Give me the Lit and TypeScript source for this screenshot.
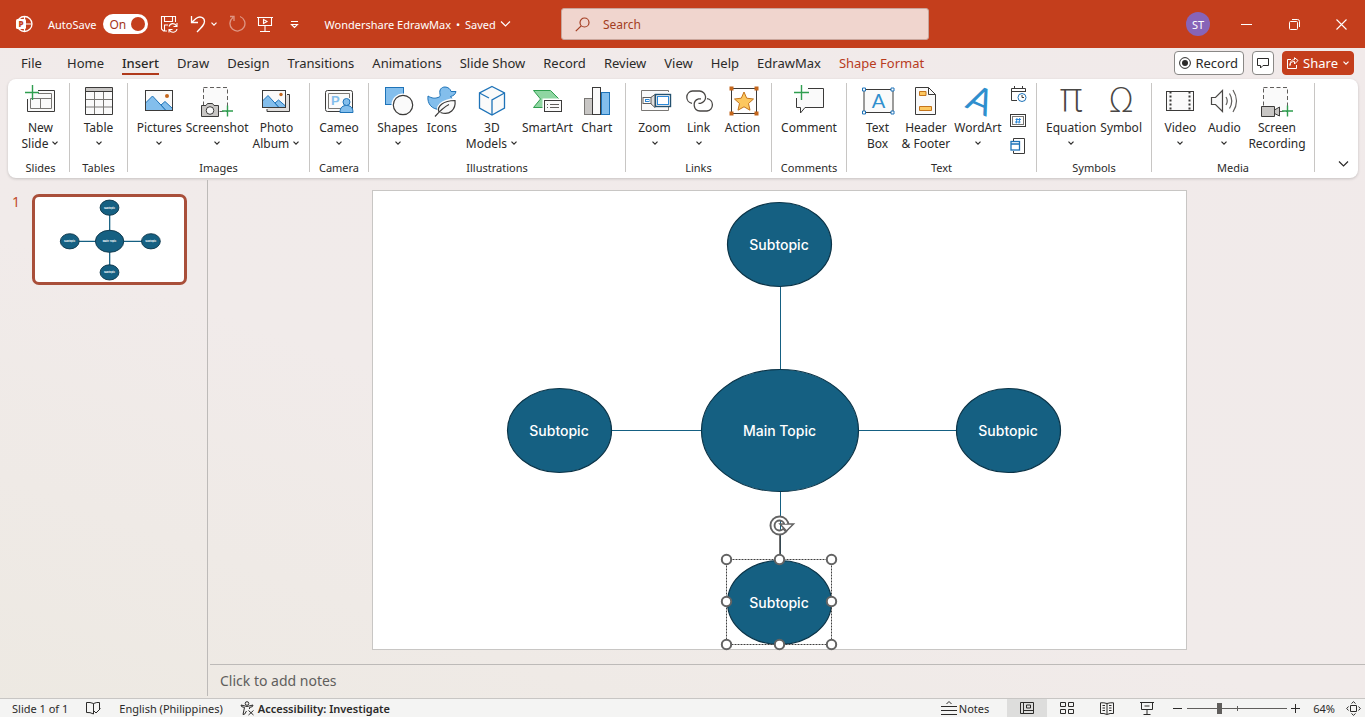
import { LitElement, html, svg, css, nothing, TemplateResult } from "lit";
import { customElement, property } from "lit/decorators.js";
import { classMap } from "lit/directives/class-map.js";

const DARK = "#3b3a39";
const BLUE = "#1e73b8";
const SKY = "#83beec";

const svgIcon = (size: number, body: unknown) =>
  html`<svg width=${size} height=${size} viewBox="0 0 ${size} ${size}" fill="none" aria-hidden="true">${body}</svg>`;

const chevron = html`<svg class="chev" width="8" height="8" viewBox="0 0 8 8" fill="none" stroke="currentColor" stroke-width="1.2" aria-hidden="true"><path d="M1.500 2.700 4 5.200 6.500 2.700"/></svg>`;

const icons: Record<string, TemplateResult> = {
  newSlide: svg`
    <path d="M13 5.500H29.500V26.500H2.500V14" stroke=${DARK} fill="#fafafa"/>
    <path d="M13 8.500H26.500V23.500H5.500V13.500H26.500M15.500 13.500V23.500" stroke="#797774"/>
    <path d="M7.500 0V15M0 7.500H14" stroke="#2f9e4f" stroke-width="1.400"/>`,
  table: svg`
    <path d="M2.500 2.500H29.500V29.500H2.500Z" fill="#fafafa"/>
    <path d="M2.500 2.500H29.500V6.500H2.500Z" fill="#c8c6c4"/>
    <path d="M2.500 14.500H29.500M2.500 22H29.500M11.500 6.500V29.500M20.500 6.500V29.500" stroke="#797774"/>
    <path d="M2.500 2.500H29.500V29.500H2.500ZM2.500 6.500H29.500" stroke=${DARK}/>`,
  pictures: svg`
    <rect x="2.500" y="5.500" width="27" height="20" fill="#fafafa"/>
    <path d="M2.500 18 9.500 11 23 25.500H2.500Z" fill=${SKY} stroke=${BLUE}/>
    <path d="M18 20 22 16.500 29.500 23.500V25.500H23Z" fill=${SKY} stroke=${BLUE}/>
    <circle cx="24" cy="11" r="2" fill="#c4661c"/>
    <rect x="2.500" y="5.500" width="27" height="20" stroke=${DARK}/>`,
  screenshot: svg`
    <rect x="2.500" y="2.500" width="24" height="24" fill="#fafafa" stroke="#605e5c" stroke-dasharray="4 2.500"/>
    <path d="M.5 20.500H5L6.500 18.500H11.500L13 20.500H17.500V31.500H.5Z" fill="#c8c6c4" stroke=${DARK}/>
    <circle cx="9" cy="25.500" r="3.800" fill="#fafafa" stroke=${DARK}/>
    <path d="M26.500 20.500V31.500M21 26H32" stroke="#2f9e4f" stroke-width="1.400"/>`,
  album: svg`
    <path d="M27 9.500H29.500V26.500H7V24" fill="#e1dfdd" stroke=${DARK}/>
    <rect x="2.500" y="5.500" width="23" height="17" fill="#fafafa"/>
    <path d="M2.500 16 8 10.500 19 22.500H2.500Z" fill=${SKY} stroke=${BLUE}/>
    <path d="M15 18 18.500 15 25.500 21V22.500H19Z" fill=${SKY} stroke=${BLUE}/>
    <circle cx="21" cy="9.500" r="1.700" fill="#c4661c"/>
    <rect x="2.500" y="5.500" width="23" height="17" stroke=${DARK}/>`,
  cameo: svg`
    <rect x="2.500" y="5.500" width="27" height="21" rx="2" fill="#fafafa" stroke=${DARK}/>
    <path d="M18 23.500H5.500V8.500H26.500V13" stroke="#797774"/>
    <text x="8" y="20" font-family="Liberation Sans, sans-serif" font-size="13" font-weight="700" fill="#83beec">P</text>
    <path d="M17 27.500C17 22 20 20.500 23.500 20.500S30 22 30 27.500Z" fill=${SKY} stroke=${BLUE}/>
    <circle cx="23.500" cy="17" r="3.500" fill=${SKY} stroke=${BLUE}/>`,
  shapes: svg`
    <rect x="3.500" y="2.500" width="18" height="17" fill=${SKY} stroke=${BLUE}/>
    <circle cx="21" cy="20" r="11.500" fill="#fff"/>
    <circle cx="21" cy="20" r="9.700" fill="#fafafa" stroke=${DARK} stroke-width="1.200"/>`,
  icons: svg`
    <path d="M2 11C6 13.500 9 13.500 12 12.500C14 12 14.500 11 14 9C13 4.500 15.500 2 19 2C22 2 24.500 4 25 6.500H30C29.500 9.500 27 11 24.500 11.500L27 15C27 20 21 24.500 14 24.500C6 24.500 1 19 2 11Z" fill=${SKY} stroke=${BLUE}/>
    <path d="M9 32 14 27C10 22 15 15.500 30 14.500C31 24 25 31 15 28" fill="#fff" stroke="#fff" stroke-width="3"/>
    <path d="M9 31.500C13 27 18 22 23 19.500M13 27C10.500 21.500 17 15.500 29 15.500C30 24 24 31 14.500 27.500" fill="#fafafa" stroke=${DARK} stroke-width="1.200"/>`,
  models: svg`
    <path d="M16 1.500 28.500 8V23L16 30 3.500 23V8Z" fill="#fafafa" stroke=${BLUE} stroke-width="1.300"/>
    <path d="M3.500 8 13 13M28.500 8 16 15V30" stroke=${BLUE} stroke-width="1.300"/>`,
  smartArt: svg`
    <path d="M2.500 5.500H19.500L28 14 19.500 22.500H2.500L9.500 14Z" fill="#8fd6a2" stroke="#2f9e4f"/>
    <rect x="11.500" y="13.500" width="20" height="15" fill="#fff"/>
    <rect x="13.500" y="15.500" width="17" height="11" fill="#fafafa" stroke=${DARK}/>
    <path d="M16 19.500H17M19 19.500H28M16 22.500H17M19 22.500H28" stroke="#605e5c"/>`,
  chart: svg`
    <rect x="3.500" y="13.500" width="8" height="16" fill="#c8c6c4" stroke="#797774"/>
    <rect x="20.500" y="7.500" width="8" height="22" fill=${SKY} stroke=${BLUE}/>
    <rect x="11.500" y="2.500" width="8" height="27" fill="#fafafa" stroke=${DARK}/>`,
  zoom: svg`
    <path d="M29.500 7V5.500H2.500V25.500H29.500V22" fill="#fafafa" stroke="#797774"/>
    <path d="M11 13 16 9.500V22.500L11 18" fill="#e1dfdd" stroke="#605e5c"/>
    <rect x="16.500" y="9.500" width="15" height="12" fill="#fff" stroke="#24516f" stroke-width="1.400"/>
    <rect x="18.500" y="11.500" width="11" height="8" stroke="#2b88d8"/>
    <rect x="4" y="12.500" width="8" height="6" fill="#fff" stroke="#605e5c"/>
    <rect x="6.500" y="14.500" width="3.500" height="2" stroke="#2b88d8"/>`,
  link: svg`
    <g stroke="#494745" stroke-width="1.300">
      <path d="M9 18.300A6.200 6.200 0 0 1 9.500 6H16.500A6.200 6.200 0 0 1 17.500 18.300H15.500"/>
      <path d="M24 13.700A6.200 6.200 0 0 1 24 26H17A6.200 6.200 0 0 1 15.500 13.900H18"/>
    </g>`,
  action: svg`
    <rect x="4.500" y="3.500" width="25" height="25" stroke=${DARK}/>
    <path d="M17 7 19.700 13.200 26.500 14 21.500 18.500 23 25.200 17 21.800 11 25.200 12.500 18.500 7.500 14 14.300 13.200Z" fill="#fcc75f" stroke="#c4741c"/>
    <path d="M2.500 1.500H6.500V5.500H2.500ZM27.500 1.500H31.500V5.500H27.500ZM2.500 26.500H6.500V30.500H2.500ZM27.500 26.500H31.500V30.500H27.500Z" fill="#c4661c"/>`,
  comment: svg`
    <path d="M15 3.500H30.500V22.500H12L7.500 28V22.500H3.500V13" fill="#fafafa" stroke=${DARK}/>
    <path d="M8.500 0V15M1 7.500H16" stroke="#2f9e4f" stroke-width="1.400"/>`,
  textBox: svg`
    <rect x="2" y="4.500" width="29" height="23" fill="#fafafa" stroke=${DARK}/>
    <text x="16.500" y="23" text-anchor="middle" font-family="Lato, sans-serif" font-size="20" fill="#2f8fce">A</text>
    <path d="M.5 3H3.500V6H.5ZM29 3H32V6H29ZM.5 26H3.500V29H.5ZM29 26H32V29H29Z" fill="#fff" stroke=${BLUE}/>`,
  header: svg`
    <path d="M5.500 2.500H18.500L25.500 9.500V29.500H5.500Z" fill="#fafafa" stroke=${DARK}/>
    <path d="M18.500 2.500V9.500H25.500" stroke=${DARK}/>
    <path d="M9.500 6.500H16V10.500H9.500ZM9.500 21.500H21.500V25.500H9.500Z" fill="#fcc75f" stroke="#c4741c"/>`,
  wordArt: svg`
    <text x="18" y="27" text-anchor="middle" transform="rotate(24 16 16)" font-family="Lato, sans-serif" font-size="36" fill="#2f8fce">A</text>`,
  pi: svg`
    <text x="16" y="26" text-anchor="middle" font-family="DejaVu Sans, sans-serif" font-weight="200" font-size="40" fill="#494745">π</text>`,
  omega: svg`
    <text x="16" y="27" text-anchor="middle" font-family="DejaVu Sans, sans-serif" font-weight="200" font-size="33" fill="#494745">Ω</text>`,
  video: svg`
    <rect x="2.500" y="6.500" width="27" height="19" fill="#fafafa" stroke=${DARK}/>
    <path d="M6.500 6.500V25.500M25.500 6.500V25.500" stroke=${DARK} stroke-width="2" stroke-dasharray="2 2"/>
    <path d="M2.500 6.500H29.500V25.500H2.500Z" stroke=${DARK}/>`,
  audio: svg`
    <path d="M3.500 12.500H7.500L14.500 5.500V26.500L7.500 19.500H3.500Z" fill="#fafafa" stroke="#494745" stroke-width="1.200"/>
    <path d="M18 12Q20.500 16 18 20M21.500 8.500Q26 16 21.500 23.500M25 5Q32 16 25 27" stroke="#605e5c" stroke-width="1.200"/>`,
  recording: svg`
    <rect x="2.500" y="2.500" width="24" height="24" fill="#fafafa" stroke="#605e5c" stroke-dasharray="4 2.500"/>
    <path d="M.5 21.500H13.500V31.500H.5ZM13.500 25 18.500 22V31L13.500 28.500" fill="#c8c6c4" stroke=${DARK}/>
    <path d="M26.500 20.500V31.500M21 26H32" stroke="#2f9e4f" stroke-width="1.400"/>`,
  date: svg`
    <path d="M7 14.500H1.500V2.500H15.500V6M1.500 5.500H15.500M4.500 0V3M12.500 0V3" stroke=${DARK}/>
    <circle cx="12" cy="11.500" r="4" fill="#fff" stroke=${BLUE}/>
    <path d="M12 9V11.500H14" stroke=${DARK}/>`,
  number: svg`
    <rect x=".5" y="2.500" width="15" height="12" stroke=${DARK}/>
    <rect x="2.500" y="4.500" width="11" height="8" stroke="#797774"/>
    <path d="M7 6 6.300 11.500M9.700 6 9 11.500M5.500 7.500H11M5 10H10.500" stroke="#2b88d8"/>`,
  object: svg`
    <path d="M3.500 3V.5H14.500V15.500H3.500V13" stroke=${DARK}/>
    <rect x="1" y="3.500" width="8.500" height="8.500" fill="#fff" stroke=${BLUE} stroke-width="1.300"/>
    <path d="M1 6H9.500" stroke=${BLUE} stroke-width="1.500"/>`,
};

interface Command { icon: string; lines: string[]; menu?: boolean }
interface Group { name: string; key: string; commands: Command[]; small?: [string, string][] }

const groups: Group[] = [
  { name: "Slides", key: "g-slides", commands: [{ icon: "newSlide", lines: ["New", "Slide"], menu: true }] },
  { name: "Tables", key: "g-tables", commands: [{ icon: "table", lines: ["Table"], menu: true }] },
  { name: "Images", key: "g-images", commands: [
    { icon: "pictures", lines: ["Pictures"], menu: true },
    { icon: "screenshot", lines: ["Screenshot"], menu: true },
    { icon: "album", lines: ["Photo", "Album"], menu: true },
  ] },
  { name: "Camera", key: "g-camera", commands: [{ icon: "cameo", lines: ["Cameo"], menu: true }] },
  { name: "Illustrations", key: "g-illustrations", commands: [
    { icon: "shapes", lines: ["Shapes"], menu: true },
    { icon: "icons", lines: ["Icons"] },
    { icon: "models", lines: ["3D", "Models"], menu: true },
    { icon: "smartArt", lines: ["SmartArt"] },
    { icon: "chart", lines: ["Chart"] },
  ] },
  { name: "Links", key: "g-links", commands: [
    { icon: "zoom", lines: ["Zoom"], menu: true },
    { icon: "link", lines: ["Link"], menu: true },
    { icon: "action", lines: ["Action"] },
  ] },
  { name: "Comments", key: "g-comments", commands: [{ icon: "comment", lines: ["Comment"] }] },
  { name: "Text", key: "g-text", commands: [
    { icon: "textBox", lines: ["Text", "Box"] },
    { icon: "header", lines: ["Header", "& Footer"] },
    { icon: "wordArt", lines: ["WordArt"], menu: true },
  ], small: [["date", "Date and time"], ["number", "Slide number"], ["object", "Object"]] },
  { name: "Symbols", key: "g-symbols", commands: [
    { icon: "pi", lines: ["Equation"], menu: true },
    { icon: "omega", lines: ["Symbol"] },
  ] },
  { name: "Media", key: "g-media", commands: [
    { icon: "video", lines: ["Video"], menu: true },
    { icon: "audio", lines: ["Audio"], menu: true },
    { icon: "recording", lines: ["Screen", "Recording"] },
  ] },
];

const tabs = ["File", "Home", "Insert", "Draw", "Design", "Transitions", "Animations", "Slide Show",
  "Record", "Review", "View", "Help", "EdrawMax", "Shape Format"];

const shared = css`
  * { box-sizing: border-box; }
  button {
    font: inherit; color: inherit; background: none; border: 0; padding: 0; margin: 0;
    display: inline-flex; align-items: center; justify-content: center; white-space: nowrap;
  }
  svg { display: block; flex: none; }
`;

@customElement("title-bar")
export class TitleBar extends LitElement {
  static styles = [shared, css`
    :host { display: grid; grid-template-columns: 561fr 368fr 436fr; align-items: center; height: 48px; background: #c43e1c; color: #fff; font-size: 11px; }
    .left { display: flex; align-items: center; padding-left: 14px; white-space: nowrap; }
    .logo { margin-right: 14px; }
    .auto { display: flex; align-items: center; gap: 7px; margin-right: 12px; }
    .switch { width: 45px; height: 20px; border-radius: 10px; background: #fff; color: #a33418; font-size: 12px; justify-content: space-between; padding: 0 3px 0 6px; }
    .knob { width: 14px; height: 14px; border-radius: 50%; background: #c43e1c; }
    .quick { display: flex; align-items: center; }
    .quick button { height: 24px; }
    .save { width: 18px; }
    .undo { margin-left: 12px; gap: 4px; }
    .redo { margin-left: 10px; opacity: .45; }
    .show { margin-left: 10px; }
    .more { margin-left: 16px; }
    .doc { margin-left: 25px; gap: 4px; }
    .doc span { padding: 0 2px; }
    .search { display: flex; align-items: center; gap: 13px; height: 32px; padding: 0 13px; background: #f0d5ce; border: 1px solid #c9a59b; border-radius: 3px; color: #a33d22; font-size: 12px; }
    .search input { flex: 1; min-width: 0; border: 0; outline: 0; background: none; color: inherit; font: inherit; padding: 0; }
    .search input::placeholder { color: #a33d22; opacity: 1; }
    .right { display: flex; justify-content: flex-end; align-items: center; }
    .avatar { width: 24px; height: 24px; border-radius: 50%; background: #8764b8; margin-right: 12px; }
    .win { width: 48px; height: 48px; }
    .win:last-child { width: 47px; }
  `];
  render() {
    return html`
      <div class="left">
        <svg class="logo" width="20" height="18" viewBox="0 0 20 18" fill="none" aria-hidden="true">
          <circle cx="10.500" cy="9" r="7.500" stroke="#fff" stroke-width="1.300"/>
          <path d="M10.500 1.500V16.500M10.500 9H18" stroke="#fff" stroke-width="1.200"/>
          <rect x="2" y="4" width="10" height="10" rx="1.500" fill="#fff"/>
          <text x="7" y="12" text-anchor="middle" font-family="Open Sans, sans-serif" font-size="8" font-weight="800" fill="#c43e1c">P</text>
        </svg>
        <div class="auto"><span id="autosave">AutoSave</span>
          <button class="switch" role="switch" aria-checked="true" aria-labelledby="autosave"><span>On</span><span class="knob"></span></button>
        </div>
        <div class="quick">
          <button class="save" aria-label="Save"><svg width="18" height="18" viewBox="0 0 18 18" fill="none" stroke="#fff" stroke-width="1.100">
            <path d="M7 16H3.500L1.500 14V1.500H15.500V7M4.500 1.500V6.500H12.500V1.500M4.500 16V10H8"/>
            <path d="M9 11.500A4 4 0 0 1 16.500 11M17 8V11.500H13.500M17 14A4 4 0 0 1 9.500 15M9 17.500V14.500H12.500"/></svg></button>
          <button class="undo" aria-label="Undo"><svg width="16" height="18" viewBox="0 0 16 18" fill="none" stroke="#fff" stroke-width="1.300">
            <path d="M1.500 1V7.500H8M1.500 7.500 6 3.500C10 .5 14.500 2.500 14.500 6.500C14.500 9.500 12 12 7 17"/></svg>${chevron}</button>
          <button class="redo" aria-label="Repeat"><svg width="18" height="18" viewBox="0 0 18 18" fill="none" stroke="#fff" stroke-width="1.300">
            <path d="M12 1.500A7.500 7.500 0 1 1 5 2.500M2 1.500H6V6"/></svg></button>
          <button class="show" aria-label="Present from beginning"><svg width="18" height="18" viewBox="0 0 18 18" fill="none" stroke="#fff" stroke-width="1.100">
            <path d="M1 2.500H17M2.500 2.500V10.500H15.500V2.500M9 10.500V16.500M4 16.500H14M7.500 4.500V8.500L11 6.500Z"/></svg></button>
          <button class="more" aria-label="Customize quick access"><svg width="9" height="9" viewBox="0 0 9 9" fill="none" stroke="#fff" stroke-width="1.100"><path d="M1 1.500H8M1.500 4.500 4.500 7.500 7.500 4.500Z"/></svg></button>
        </div>
        <button class="doc"><div>Wondershare EdrawMax <span>•</span> Saved</div><svg width="11" height="8" viewBox="0 0 11 8" fill="none" stroke="#fff" stroke-width="1.200"><path d="M1 1.500 5.500 6 10 1.500"/></svg></button>
      </div>
      <label class="search">
        <svg width="15" height="15" viewBox="0 0 15 15" fill="none" stroke="#a33d22" stroke-width="1.200" aria-hidden="true"><circle cx="9.500" cy="5.500" r="4.500"/><path d="M6.200 8.800.8 14.200"/></svg>
        <input type="text" placeholder="Search" aria-label="Search">
      </label>
      <div class="right">
        <button class="avatar" aria-label="Account">ST</button>
        <button class="win" aria-label="Minimize"><svg width="11" height="11" viewBox="0 0 11 11" stroke="#fff"><path d="M0 5.500H11"/></svg></button>
        <button class="win" aria-label="Restore"><svg width="11" height="11" viewBox="0 0 11 11" fill="none" stroke="#fff"><rect x=".5" y="2.500" width="8" height="8" rx="1"/><path d="M3 .5H8.500Q10.500 .5 10.500 2.500V8"/></svg></button>
        <button class="win" aria-label="Close"><svg width="11" height="11" viewBox="0 0 11 11" stroke="#fff" stroke-width="1.100"><path d="M.5.5 10.500 10.500M10.500.5.5 10.500"/></svg></button>
      </div>`;
  }
}

@customElement("tab-row")
export class TabRow extends LitElement {
  static styles = [shared, css`
    :host { display: flex; align-items: flex-start; justify-content: space-between; height: 31px; padding: 0 11px 0 5px; font-size: 13px; color: #2b2a29; }
    nav { display: flex; }
    .tab { padding: 0 9px; }
    .tab.first { width: 53px; }
    .tab span { padding: 6px 0 1px; line-height: 18px; border-bottom: 2px solid transparent; }
    .tab.active { font-weight: 500; }
    .tab.active span { border-color: #b0391b; }
    .tab.context { color: #b83b1d; }
    .actions { display: flex; gap: 8px; padding-top: 3px; }
    .actions button { height: 24px; border: 1px solid #8a8886; border-radius: 4px; background: #fff; }
    .actions .record { padding: 0 5px 0 4px; gap: 4px; }
    .actions .note { width: 22px; }
    .actions .share { color: #fff; background: #c43e1c; border-color: #c43e1c; padding: 0 3px; gap: 4px; }
  `];
  render() {
    return html`
      <nav aria-label="Ribbon tabs">${tabs.map((t, i) => html`<button class=${classMap({ tab: true, first: i === 0, active: t === "Insert", context: t === "Shape Format" })}><span>${t}</span></button>`)}</nav>
      <div class="actions">
        <button class="record"><svg width="12" height="12" viewBox="0 0 12 12"><circle cx="6" cy="6" r="5.400" fill="none" stroke="#2b2a29"/><circle cx="6" cy="6" r="3" fill="#2b2a29"/></svg>Record</button>
        <button class="note" aria-label="Comments"><svg width="12" height="12" viewBox="0 0 12 12" fill="none" stroke="#2b2a29"><path d="M.5 1.500H11.500V8.500H6L3.500 11V8.500H.5Z"/></svg></button>
        <button class="share"><svg width="13" height="12" viewBox="0 0 13 12" fill="none" stroke="#fff"><path d="M5 2.500H1.500V11.500H10.500V8M4 8.500C4 5.500 6 4.500 8.500 4.500V7L12 3.500 8.500.7V2.700C5 2.700 4 5.500 4 8.500Z"/></svg>Share ${chevron}</button>
      </div>`;
  }
}

@customElement("ribbon-panel")
export class RibbonPanel extends LitElement {
  static styles = [shared, css`
    :host { display: flex; height: 99px; margin: 0 7px 0 8px; border-radius: 8px; background: #fff; box-shadow: 0 1px 3px #0000002e; font-size: 12px; line-height: 16px; color: #2b2a29; }
    svg { overflow: visible; }
    .group { display: flex; flex-direction: column; justify-content: space-between; flex: none; border-right: 1px solid #c8c6c4; margin: 4px 0 6px; padding-top: 2px; }
    .commands { display: flex; justify-content: center; gap: 2px; }
    .cmd { flex-direction: column; justify-content: flex-start; min-width: 42px; padding: 0 1px; }
    .cmd svg:first-child { margin-bottom: 3px; }
    .line { display: flex; align-items: center; gap: 3px; height: 16px; }
    .small { display: flex; flex-direction: column; gap: 10px; padding: 1px 0 0 6px; }
    .name { text-align: center; line-height: 8px; font-size: 11px; }
    .g-slides { width: 62px; padding-left: 4px; }
    .g-tables { width: 58px; }
    .g-images { width: 182px; }
    .g-camera { width: 59px; }
    .g-illustrations { width: 257px; }
    .g-links { width: 146px; }
    .g-comments { width: 75px; }
    .g-text { width: 190px; }
    .g-symbols { width: 115px; }
    .g-media { width: 163px; }
    .collapse { margin: auto 9px 10px auto; }
  `];
  render() {
    return html`${groups.map((g) => html`
      <section class="group ${g.key}" aria-label=${g.name}>
        <div class="commands">
          ${g.commands.map((c) => html`<button class="cmd">${svgIcon(32, icons[c.icon])}
            ${c.lines.map((l, i) => html`<span class="line">${l}${c.menu && c.lines.length === 2 && i === 1 ? chevron : nothing}</span>`)}
            ${c.menu && c.lines.length === 1 ? html`<span class="line">${chevron}</span>` : nothing}</button>`)}
          ${g.small ? html`<div class="small">${g.small.map(([k, n]) => html`<button aria-label=${n}>${svgIcon(16, icons[k])}</button>`)}</div>` : nothing}
        </div>
        <div class="name">${g.name}</div>
      </section>`)}
      <button class="collapse" aria-label="Collapse ribbon"><svg width="11" height="8" viewBox="0 0 11 8" fill="none" stroke="#2b2a29" stroke-width="1.200"><path d="M1 1.500 5.500 6 10 1.500"/></svg></button>`;
  }
}

const nodes = [
  { x: 406.5, y: 54.5, rx: 52, ry: 42, label: "Subtopic" },
  { x: 186.5, y: 240.5, rx: 52, ry: 42, label: "Subtopic" },
  { x: 635.5, y: 240.5, rx: 52, ry: 42, label: "Subtopic" },
  { x: 406.5, y: 412.5, rx: 52, ry: 42, label: "Subtopic" },
  { x: 407, y: 240.5, rx: 78.5, ry: 61, label: "Main Topic" },
];

@customElement("slide-view")
export class SlideView extends LitElement {
  @property({ type: Boolean }) selected = false;
  @property({ type: Boolean }) thumb = false;
  static styles = css`
    :host { display: block; }
    svg { display: block; width: 100%; height: auto; }
    text { font-family: Inter, "Noto Sans", sans-serif; font-size: 14px; font-weight: 500; fill: #fff; text-anchor: middle; }
    .thumb text { font-weight: 700; }
  `;
  render() {
    const handles = [[353.5, 369.5], [406.5, 369.5], [458.5, 369.5], [353.5, 411.5], [458.5, 411.5], [353.5, 454.5], [406.5, 454.5], [458.5, 454.5]];
    return html`<svg class=${this.thumb ? "thumb" : ""} viewBox="0 1 813 458" overflow="visible" role="img" aria-label="Radial diagram with a main topic and four subtopics">
      <path d="M407.500 54V412M187 240.500H636" stroke="#156082" stroke-width=${this.thumb ? 7 : 1} fill="none"/>
      ${this.selected ? svg`<path d="M407 344V369" stroke="#404040" stroke-width="1.500"/>` : nothing}
      ${nodes.map((n) => svg`<ellipse cx=${n.x} cy=${n.y} rx=${n.rx} ry=${n.ry} fill="#156082" stroke="#0b3448" stroke-width=${this.thumb ? 5 : 1.2}/>
        <text x=${n.x - 0.5} y=${n.y + 5}>${n.label}</text>`)}
      ${this.selected ? svg`
        <rect x="353.500" y="369.500" width="105" height="85" fill="none" stroke="#404040" stroke-dasharray="2 1"/>
        ${handles.map(([x, y]) => svg`<circle cx=${x} cy=${y} r="4.700" fill="#fff" stroke="#636363" stroke-width="2"/>`)}
        <circle cx="406.500" cy="335.500" r="7" fill="none" stroke="#636363" stroke-width="6"/>
        <path d="M407 334H420.500L413.500 341Z" fill="#fff" stroke="#636363" stroke-width="1.500"/>
        <circle cx="406.500" cy="335.500" r="7" fill="none" stroke="#fff" stroke-width="2.200" stroke-dasharray="36 8" transform="rotate(50 406.500 335.500)"/>` : nothing}
    </svg>`;
  }
}

@customElement("status-bar")
export class StatusBar extends LitElement {
  static styles = [shared, css`
    :host { display: flex; justify-content: space-between; align-items: center; height: 19px; border-top: 1px solid #c8c6c4; background: #f4f4f3; color: #2b2a29; font-size: 11px; line-height: 19px; overflow: hidden; white-space: nowrap; }
    .side { display: flex; align-items: center; height: 20px; }
    .left { padding-left: 12px; }
    .proof { margin: 0 18px; }
    .access { margin-left: 17px; gap: 3px; font-weight: 600; }
    .notes { gap: 2px; margin-right: 18px; }
    .view { width: 40px; height: 20px; }
    .view.on { background: #dddddc; }
    .zoom { width: 20px; height: 20px; }
    input { appearance: none; width: 100px; height: 12px; margin: 0 -2px 0 0; background:
      linear-gradient(#605e5c, #605e5c) 50px 50% / 1px 5px no-repeat,
      linear-gradient(#605e5c, #605e5c) 0 50% / 100% 1px no-repeat; }
    input::-webkit-slider-thumb { appearance: none; width: 5px; height: 11px; background: #605e5c; border-radius: 0; }
    .percent { margin: 0 11px 0 8px; }
    .fit { margin-right: 4px; }
  `];
  render() {
    const s = "#2b2a29";
    return html`
      <div class="side left">
        <span>Slide 1 of 1</span>
        <button class="proof" aria-label="Proofing"><svg width="15" height="14" viewBox="0 0 15 14" fill="none" stroke=${s}><path d="M7.500 2.500Q4 1 .5 1.500V11.500Q4 11 7.500 13M7.500 2.500V13M7.500 2.500Q11 1 13.500 1.500V8M7.500 9.500 10 12 14.500 7.500"/></svg></button>
        <button>English (Philippines)</button>
        <button class="access"><svg width="15" height="15" viewBox="0 0 15 15" fill="none" stroke=${s}><circle cx="7" cy="2.500" r="1.800"/><path d="M1 4Q7 7 13 4M1 4Q.5 6 4.500 6.500L3 13.500Q4.500 14.500 6.500 10M13 4Q13.500 6 9.500 6.500V8M8.500 9.500 13.500 14M13.500 9.500 8.500 14"/></svg>Accessibility: Investigate</button>
      </div>
      <div class="side">
        <button class="notes"><svg width="16" height="16" viewBox="0 0 16 16" fill="none" stroke=${s}><path d="M5.500 4 8 1.500 10.500 4M0 6.500H16M0 10.500H16M0 14.500H16"/></svg>Notes</button>
        <button class="view on" aria-label="Normal view"><svg width="14" height="12" viewBox="0 0 14 12" fill="none" stroke=${s}><path d="M.5.5H13.500V11.500H.5ZM3.500.5V11.500M3.500 8.500H13.500M6.500 3H10.500V6H6.500Z"/></svg></button>
        <button class="view" aria-label="Slide sorter"><svg width="14" height="12" viewBox="0 0 14 12" fill="none" stroke=${s}><path d="M.5.5H5.500V4.500H.5ZM8.500.5H13.500V4.500H8.500ZM.5 7.500H5.500V11.500H.5ZM8.500 7.500H13.500V11.500H8.500Z"/></svg></button>
        <button class="view" aria-label="Reading view"><svg width="14" height="13" viewBox="0 0 14 13" fill="none" stroke=${s}><path d="M7 1.500Q4 .5.5.8V11.500Q4 11 7 12.500Q10 11 13.500 11.500V.8Q10 .5 7 1.500V12M2.500 3.500H5M2.500 6H5M2.500 8.500H5M9 3.500H11.500M9 6H11.500M9 8.500H11.500"/></svg></button>
        <button class="view" aria-label="Slide show"><svg width="14" height="13" viewBox="0 0 14 13" fill="none" stroke=${s}><path d="M0 .5H14M1.500.5V7.500H12.500V.5M4.500 4H9.500M7 7.500V12.500M3.500 12.500H10.500"/></svg></button>
        <button class="zoom" aria-label="Zoom out"><svg width="9" height="9" viewBox="0 0 9 9" stroke=${s}><path d="M0 4.500H9"/></svg></button>
        <input type="range" min="0" max="100" value="31" aria-label="Zoom level">
        <button class="zoom" aria-label="Zoom in"><svg width="9" height="9" viewBox="0 0 9 9" stroke=${s}><path d="M0 4.500H9M4.500 0V9"/></svg></button>
        <button class="percent">64%</button>
        <button class="fit" aria-label="Fit slide to window"><svg width="15" height="15" viewBox="0 0 15 15" fill="none" stroke=${s}><path d="M4.500 4.500H10.500V10.500H4.500ZM5.500 2.500 7.500.7 9.500 2.500M5.500 12.500 7.500 14.300 9.500 12.500M2.500 5.500.7 7.500 2.500 9.500M12.500 5.500 14.300 7.500 12.500 9.500"/></svg></button>
      </div>`;
  }
}

@customElement("app-root")
export class AppRoot extends LitElement {
  static styles = css`
    * { box-sizing: border-box; }
    :host { display: flex; flex-direction: column; height: 100vh; overflow: hidden; font-family: "Noto Sans", "Open Sans", sans-serif; background: linear-gradient(20deg, #ede9e2, #f1ebea 40%, #f1eaea); }
    main { flex: 1; min-height: 0; display: grid; grid-template-columns: 208px 1fr; padding-top: 2px; }
    .slides { display: flex; align-items: flex-start; gap: 12px; padding: 14px 0 0 12px; margin-bottom: 2px; border-right: 1px solid #bdbab8; color: #c2492c; font-size: 14px; line-height: 16px; }
    .thumb { width: 155px; border: 3px solid #a94f3a; border-radius: 7px; background: #fff; padding: 1px; }
    .stage { display: flex; flex-direction: column; min-width: 0; }
    .canvas { flex: 1; padding: 10px 16px 0 2px; display: flex; justify-content: center; align-items: flex-start; }
    .slide { width: 100%; max-width: 815px; border: 1px solid #c8c6c4; background: #fff; }
    .notes { margin-left: 2px; height: 34px; border: 0; border-top: 1px solid #bdbab8; background: none; font: inherit; font-size: 14px; line-height: 20px; padding: 6px 10px; resize: none; outline: 0; overflow: hidden; }
    .notes::placeholder { color: #605e5c; opacity: 1; }
  `;
  render() {
    return html`
      <title-bar></title-bar>
      <tab-row></tab-row>
      <ribbon-panel></ribbon-panel>
      <main>
        <aside class="slides"><span>1</span><slide-view class="thumb" thumb></slide-view></aside>
        <div class="stage">
          <div class="canvas"><slide-view class="slide" selected></slide-view></div>
          <textarea class="notes" aria-label="Notes" placeholder="Click to add notes"></textarea>
        </div>
      </main>
      <status-bar></status-bar>`;
  }
}
